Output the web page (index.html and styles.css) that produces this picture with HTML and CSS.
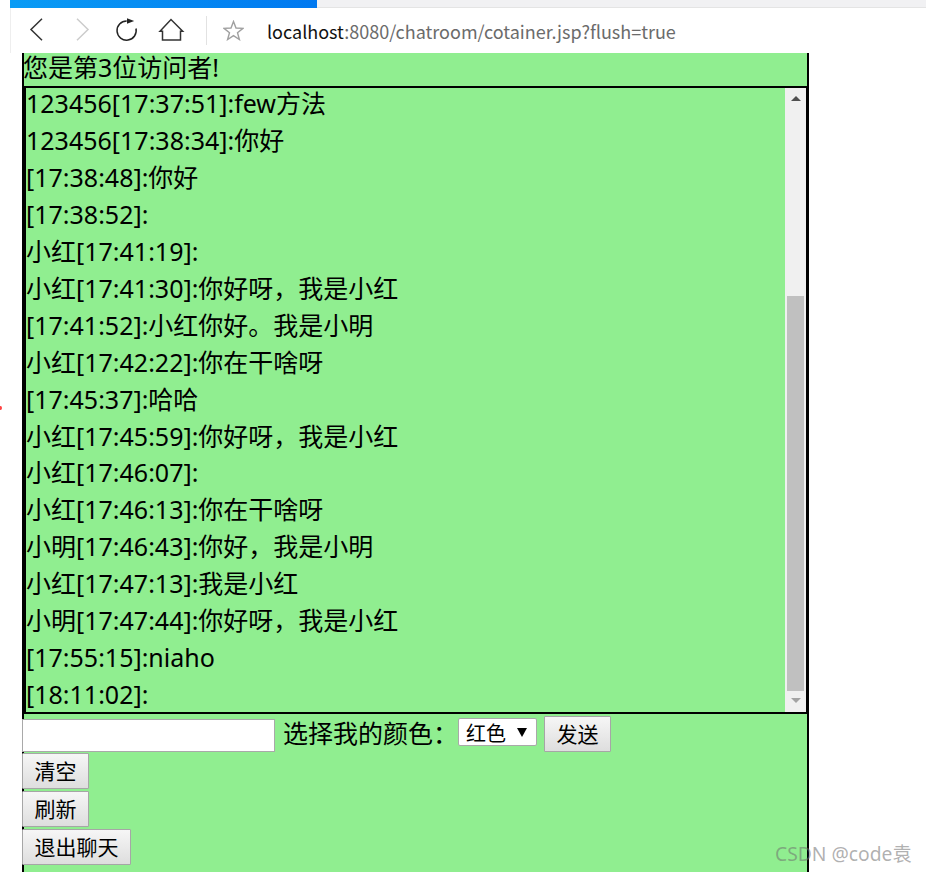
FILE: index.html
```html
<!DOCTYPE html>
<html lang="zh-CN">
<head>
  <meta charset="UTF-8">
  <meta name="viewport" content="width=device-width, initial-scale=1.0">
  <title>聊天室</title>
  <link rel="stylesheet" href="styles.css">
</head>
<body>
  <div class="tab-strip">
    <div class="tab-progress"></div>
  </div>

  <div class="toolbar">
    <svg class="tool-icon back" width="24" height="26" viewBox="0 0 24 26"><path d="M16 0.8 L5 11.5 L16 22.2" fill="none" stroke="#333" stroke-width="1.5"/></svg>
    <svg class="tool-icon forward" width="24" height="26" viewBox="0 0 24 26"><path d="M4 0.8 L15 11.5 L4 22.2" fill="none" stroke="#ccc" stroke-width="1.5"/></svg>
    <svg class="tool-icon reload" width="24" height="26" viewBox="0 0 24 26"><path d="M11.7 3 A9.6 9.6 0 1 0 21 10.5" fill="none" stroke="#222" stroke-width="1.5"/><path d="M12 0.3 L19.2 3 L12 5.7 Z" fill="#222"/></svg>
    <svg class="tool-icon home" width="27" height="26" viewBox="0 0 27 26"><path d="M2 13.2 L13 1.5 L24.7 13.2 H22.5 V22 H4.5 V13.2 Z" fill="none" stroke="#333" stroke-width="1.5"/></svg>
    <div class="tool-sep"></div>
    <svg class="star" width="21" height="21" viewBox="0 0 21 21"><path d="M10.5 1.5 L13 8 L20 8.3 L14.5 12.7 L16.4 19.5 L10.5 15.6 L4.6 19.5 L6.5 12.7 L1 8.3 L8 8 Z" fill="none" stroke="#a0a0a0" stroke-width="1.4"/></svg>
    <div class="address"><span class="host">localhost</span>:8080/chatroom/cotainer.jsp?flush=true</div>
  </div>

  <div class="chatroom">
    <div class="visitors">您是第3位访问者!</div>

    <div class="message-box">
      <div class="messages">
        <div class="msg">123456[17:37:51]:few方法</div>
        <div class="msg">123456[17:38:34]:你好</div>
        <div class="msg">[17:38:48]:你好</div>
        <div class="msg">[17:38:52]:</div>
        <div class="msg">小红[17:41:19]:</div>
        <div class="msg">小红[17:41:30]:你好呀，我是小红</div>
        <div class="msg">[17:41:52]:小红你好。我是小明</div>
        <div class="msg">小红[17:42:22]:你在干啥呀</div>
        <div class="msg">[17:45:37]:哈哈</div>
        <div class="msg">小红[17:45:59]:你好呀，我是小红</div>
        <div class="msg">小红[17:46:07]:</div>
        <div class="msg">小红[17:46:13]:你在干啥呀</div>
        <div class="msg">小明[17:46:43]:你好，我是小明</div>
        <div class="msg">小红[17:47:13]:我是小红</div>
        <div class="msg">小明[17:47:44]:你好呀，我是小红</div>
        <div class="msg">[17:55:15]:niaho</div>
        <div class="msg">[18:11:02]:</div>
      </div>
      <div class="scrollbar">
        <div class="arrow-up"></div>
        <div class="thumb"></div>
        <div class="arrow-down"></div>
      </div>
    </div>

    <div class="send-row">
      <input class="msg-input" type="text">
      <span class="color-label">选择我的颜色：</span>
      <div class="color-select">红色<span class="select-arrow"></span></div>
      <button class="btn send-btn">发送</button>
    </div>
    <div class="btn-row"><button class="btn">清空</button></div>
    <div class="btn-row"><button class="btn">刷新</button></div>
    <div class="btn-row"><button class="btn">退出聊天</button></div>
  </div>

  <div class="red-dot"></div>
  <div class="watermark">CSDN @code袁</div>
</body>
</html>
```

FILE: styles.css
```css
* {
  margin: 0;
  padding: 0;
  box-sizing: border-box;
}
html, body {
  height: 872px;
  overflow: hidden;
  background-color: #fff;
  font-family: "Noto Sans", "Noto Sans CJK SC", sans-serif;
  color: #000;
}
.tab-strip {
  height: 8px;
  margin-left: 10px;
  background-color: #f1f1f3;
  border-bottom: 1px solid #e4e4e4;
}
.tab-progress {
  width: 307px;
  height: 8px;
  background: linear-gradient(to right, #0a9cf5, #0078f0);
}
.toolbar {
  height: 45px;
  margin-left: 10px;
  display: flex;
  align-items: center;
  border-left: 1px solid #eee;
  padding-left: 15px;
}
.tool-icon {
  flex-shrink: 0;
}
.forward {
  margin-left: 23px;
}
.reload {
  margin-left: 18px;
}
.home {
  margin-left: 19px;
}
.tool-sep {
  width: 1px;
  height: 29px;
  margin-left: 21px;
  background-color: #e2e2e2;
}
.star {
  margin-left: 16px;
}
.address {
  margin-left: 23px;
  font-family: "Noto Sans CJK SC", sans-serif;
  font-size: 18px;
  color: #6b6b6b;
}
.host {
  color: #111;
}
.chatroom {
  width: 787px;
  height: 819px;
  margin-left: 22px;
  background-color: #90ee90;
  border-left: 2px solid #000;
  border-right: 2px solid #000;
}
.visitors {
  height: 33px;
  margin-left: -1px;
  font-size: 25px;
  line-height: 29px;
  white-space: nowrap;
}
.message-box {
  height: 628px;
  margin-right: -1px;
  border: 2px solid #000;
  display: flex;
}
.messages {
  flex: 1;
  font-size: 25px;
  line-height: 36.95px;
}
.msg {
  height: 36.95px;
  white-space: nowrap;
}
/* first row sits higher, the log is scrolled a little */
.msg:first-child {
  height: 34px;
  line-height: 30px;
}
.scrollbar {
  width: 21px;
  height: 624px;
  background-color: #f0f0f0;
  display: flex;
  flex-direction: column;
  align-items: center;
  padding: 0 2px;
}
.arrow-up {
  width: 0;
  height: 0;
  margin-top: 8px;
  border-left: 5px solid transparent;
  border-right: 5px solid transparent;
  border-bottom: 5px solid #505050;
}
.thumb {
  width: 17px;
  height: 395px;
  margin-top: auto;
  background-color: #c0c0c0;
}
.arrow-down {
  width: 0;
  height: 0;
  margin: 7px 0 9px;
  border-left: 5px solid transparent;
  border-right: 5px solid transparent;
  border-top: 5px solid #a3a3a3;
}
.send-row {
  height: 39px;
  margin-left: -2px;
  display: flex;
  align-items: flex-start;
  font-size: 25px;
}
.msg-input {
  width: 253px;
  height: 33px;
  margin-top: 5px;
  border: 1px solid #a9a9a9;
  background-color: #fff;
}
.color-label {
  margin-left: 8px;
  line-height: 38px;
  white-space: nowrap;
}
.color-select {
  width: 79px;
  height: 28px;
  margin-top: 4px;
  padding-left: 7px;
  display: flex;
  align-items: center;
  background-color: #fff;
  border: 1px solid #a9a9a9;
  border-radius: 2px;
  font-size: 20px;
}
.select-arrow {
  width: 0;
  height: 0;
  margin-left: 11px;
  border-left: 5px solid transparent;
  border-right: 5px solid transparent;
  border-top: 9px solid #000;
}
.btn {
  height: 36px;
  padding: 0 11.5px;
  font-family: inherit;
  font-size: 21px;
  line-height: 30px;
  color: #000;
  background: linear-gradient(#f6f6f6, #dedede);
  border: 1px solid #a6a6a6;
  border-radius: 1px;
}
.send-btn {
  margin-left: 7px;
  margin-top: 2px;
}
.btn-row {
  margin-left: -2px;
  height: 38px;
  display: flex;
}
.red-dot {
  position: absolute;
  left: -1px;
  top: 406px;
  width: 3px;
  height: 4px;
  border-radius: 50%;
  background-color: #f44;
}
.watermark {
  position: absolute;
  left: 775px;
  top: 839px;
  font-size: 19.3px;
  color: rgba(110, 110, 110, 0.55);
  white-space: nowrap;
}
```
